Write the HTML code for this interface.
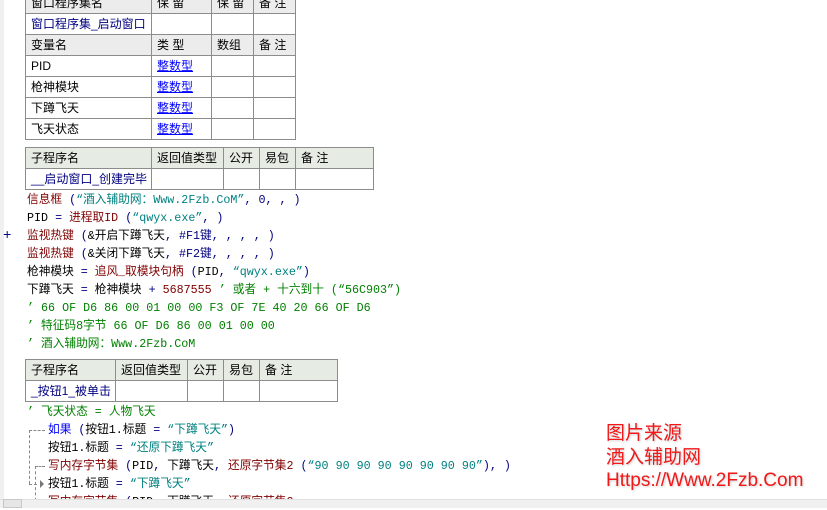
<!DOCTYPE html>
<html><head><meta charset="utf-8"><style>
*{margin:0;padding:0;box-sizing:border-box}
body{width:827px;height:508px;overflow:hidden;background:#fff;position:relative;font-family:"Liberation Mono","Noto Sans CJK SC",monospace;font-size:12px;color:#000}
.strip{position:absolute;left:0;top:0;width:4px;height:508px;background:#f0f0f0}
table{position:absolute;border-collapse:collapse;font-family:"Liberation Sans","Noto Sans CJK SC",sans-serif;font-size:12px}
td{border:1px solid #8c8c8c;padding:0 0 0 5px;height:21px;white-space:nowrap;vertical-align:middle;line-height:14px}
.h td{background:#ececec}
.h2 td{background:#e6ece4}
.nv{color:#000080}.bl{color:#0000ff;text-decoration:underline}
.l{position:absolute;left:27px;white-space:nowrap;line-height:16px;font-family:"Liberation Mono","Noto Sans CJK SC",monospace;font-size:11.7px}
.r{color:#800000}.g{color:#008000}.t{color:#008080}.b{color:#000080}.k{color:#0000ff}
.wm{position:absolute;left:606px;color:#f01818;font-family:"Liberation Sans","Noto Sans CJK SC",sans-serif;font-size:19px;line-height:22px;text-shadow:1px 1px 2px #ccc}
.dash{position:absolute;border-color:#888;border-style:dashed;border-width:0}
</style></head><body>
<div class="strip"></div>
<table style="left:25px;top:-8px">
<tr class="h"><td style="width:126px">窗口程序集名</td><td style="width:60px">保 留</td><td style="width:42px">保 留</td><td style="width:42px">备 注</td></tr>
<tr><td class="nv">窗口程序集_启动窗口</td><td></td><td></td><td></td></tr>
<tr class="h"><td>变量名</td><td>类 型</td><td>数组</td><td>备 注</td></tr>
<tr><td>PID</td><td><span class="bl">整数型</span></td><td></td><td></td></tr>
<tr><td>枪神模块</td><td><span class="bl">整数型</span></td><td></td><td></td></tr>
<tr><td>下蹲飞天</td><td><span class="bl">整数型</span></td><td></td><td></td></tr>
<tr><td>飞天状态</td><td><span class="bl">整数型</span></td><td></td><td></td></tr>
</table>
<table style="left:25px;top:147px">
<tr class="h2"><td style="width:126px">子程序名</td><td style="width:72px">返回值类型</td><td style="width:36px">公开</td><td style="width:36px">易包</td><td style="width:78px">备 注</td></tr>
<tr><td class="nv">__启动窗口_创建完毕</td><td></td><td></td><td></td><td></td></tr>
</table>
<div class="l" style="top:192px"><span class="r">信息框</span> <span class="b">(</span><span class="t">“酒入辅助网：Www.2Fzb.CoM”</span><span class="b">, 0, , )</span></div>
<div class="l" style="top:210px">PID <span class="b">=</span> <span class="r">进程取ID</span> <span class="b">(</span><span class="t">“qwyx.exe”</span><span class="b">, )</span></div>
<div class="l" style="left:3px;top:228px;color:#000080;font-size:14px">+</div>
<div class="l" style="top:228px"><span class="r">监视热键</span> <span class="b">(</span>&amp;开启下蹲飞天<span class="b">,</span> <span class="b">#F1键, , , , )</span></div>
<div class="l" style="top:246px"><span class="r">监视热键</span> <span class="b">(</span>&amp;关闭下蹲飞天<span class="b">,</span> <span class="b">#F2键, , , , )</span></div>
<div class="l" style="top:264px">枪神模块 <span class="b">=</span> <span class="r">追风_取模块句柄</span> <span class="b">(</span>PID<span class="b">,</span> <span class="t">“qwyx.exe”</span><span class="b">)</span></div>
<div class="l" style="top:282px">下蹲飞天 <span class="b">=</span> 枪神模块 <span class="b">+</span> <span class="r">5687555</span> <span class="g">’ 或者 + 十六到十 (“56C903”)</span></div>
<div class="l g" style="top:300px">’ 66 OF D6 86 00 01 00 00 F3 OF 7E 40 20 66 OF D6</div>
<div class="l g" style="top:318px">’ 特征码8字节 66 OF D6 86 00 01 00 00</div>
<div class="l g" style="top:336px">’ 酒入辅助网：Www.2Fzb.CoM</div>
<table style="left:25px;top:359px">
<tr class="h2"><td style="width:90px">子程序名</td><td style="width:72px">返回值类型</td><td style="width:36px">公开</td><td style="width:36px">易包</td><td style="width:78px">备 注</td></tr>
<tr><td class="nv">_按钮1_被单击</td><td></td><td></td><td></td><td></td></tr>
</table>
<div class="l g" style="top:404px">’ 飞天状态 = 人物飞天</div>
<div class="dash" style="left:29px;top:430px;width:16px;border-top-width:1px"></div>
<div class="dash" style="left:29px;top:430px;height:54px;border-left-width:1px"></div>
<div class="dash" style="left:29px;top:484px;width:8px;border-top-width:1px"></div>
<div class="dash" style="left:35px;top:466px;width:10px;border-top-width:1px"></div>
<div class="dash" style="left:35px;top:466px;height:40px;border-left-width:1px"></div>
<div style="position:absolute;left:40px;top:480px;width:0;height:0;border-left:4px solid #777;border-top:4px solid transparent;border-bottom:4px solid transparent"></div>
<div class="l" style="left:48px;top:422px"><span class="k">如果</span> <span class="b">(</span>按钮1.标题 <span class="b">=</span> <span class="t">“下蹲飞天”</span><span class="b">)</span></div>
<div class="l" style="left:48px;top:440px">按钮1.标题 <span class="b">=</span> <span class="t">“还原下蹲飞天”</span></div>
<div class="l" style="left:48px;top:458px"><span class="r">写内存字节集</span> <span class="b">(</span>PID<span class="b">,</span> 下蹲飞天<span class="b">,</span> <span class="r">还原字节集2</span> <span class="b">(</span><span class="t">“90 90 90 90 90 90 90 90”</span><span class="b">), )</span></div>
<div class="l" style="left:48px;top:476px">按钮1.标题 <span class="b">=</span> <span class="t">“下蹲飞天”</span></div>
<div class="l" style="left:48px;top:494px"><span class="r">写内存字节集</span> <span class="b">(</span>PID<span class="b">,</span> 下蹲飞天<span class="b">,</span> <span class="r">还原字节集2</span></div>
<div style="position:absolute;left:0;top:499px;width:827px;height:9px;background:#f0f0f0;border-top:1px solid #e0e0e0"></div>
<div style="position:absolute;left:3px;top:499px;width:19px;height:9px;background:#e6e6e6;border:1px solid #c8c8c8"></div>
<div class="wm" style="top:423px">图片来源</div>
<div class="wm" style="top:447px">酒入辅助网</div>
<div class="wm" style="top:470px">Https://Www.2Fzb.Com</div>
</body></html>
